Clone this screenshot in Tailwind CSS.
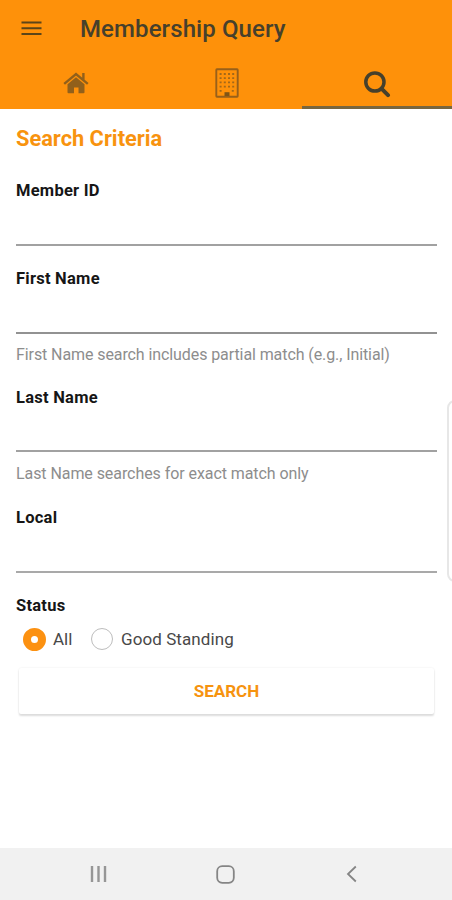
<!DOCTYPE html>
<html lang="en">
<head>
<meta charset="utf-8">
<title>Membership Query</title>
<script src="https://cdn.jsdelivr.net/npm/@tailwindcss/browser@4"></script>
</head>
<body class="font-[Roboto,sans-serif] bg-white">
<div class="relative flex flex-col h-[900px] w-[452px] overflow-hidden">
  <header class="h-[109px] shrink-0 bg-[#fe910a] text-[#46402c]">
    <div class="flex h-[58px] items-center pl-[21px]">
      <svg class="w-[21px] h-4 shrink-0 mb-0.5" viewBox="0 0 21 16" fill="none" stroke="#5b4519" stroke-width="2"><path d="M0.5 2.5H20.5M0.5 8.2H20.5M0.5 14H20.5"/></svg>
      <h1 class="ml-[38px] text-[24px] leading-7 font-medium tracking-[0.1px] whitespace-nowrap">Membership Query</h1>
    </div>
    <nav class="grid grid-cols-[151px_151px_150px] h-[51px]">
      <div class="flex items-center justify-center pb-px">
        <svg class="w-[26px] h-[22px]" viewBox="0 0 26 22"><path d="M1.2 11.8 13 2 24.8 11.8M20.4 1V8" fill="none" stroke="#91601b" stroke-width="2.4"/><path d="M4.5 12.2 13 5.2 21.5 12.2V20.2Q21.5 21.2 20.5 21.2H15.5V15.5H11V21.2H5.5Q4.5 21.2 4.5 20.2Z" fill="#91601b"/></svg>
      </div>
      <div class="flex items-center justify-center pb-px">
        <svg class="w-6 h-[30px]" viewBox="0 0 24 30"><rect x="1.3" y="1.3" width="21.4" height="27.4" rx=".6" fill="none" stroke="#98601a" stroke-width="1.9"/><path d="M4.6 6H20M4.6 10.2H20M4.6 14.4H20M4.6 18.6H20M4.6 22.8H8M16.8 22.8H20" stroke="#a36819" stroke-width="1.8" stroke-dasharray="2 2.2" fill="none"/><path d="M9.5 28V24.2H14.5V28Z" fill="#805516"/></svg>
      </div>
      <div class="flex items-center justify-center border-b-[3px] border-[#79663e] pt-[3px]">
        <svg class="w-7 h-7" viewBox="0 0 28 28" fill="none" stroke="#46402c"><circle cx="11.9" cy="12" r="9.1" stroke-width="3.5"/><path d="M18.5 18.7 25 25.2" stroke-width="4" stroke-linecap="round"/></svg>
      </div>
    </nav>
  </header>

  <main class="flex flex-col grow pl-4 pr-[15px] pt-4 text-[#161616]">
    <h2 class="h-7 leading-7 text-[21.8px] font-bold text-[#f8930f]">Search Criteria</h2>

    <section class="mt-[28px] h-[65px] border-b-2 border-[#a1a1a1]">
      <label class="block h-5 leading-5 text-[16.5px] tracking-[0.25px] font-bold">Member ID</label>
    </section>
    <section class="mt-[23px] h-[65px] border-b-2 border-[#929292]">
      <label class="block h-5 leading-5 text-[16.5px] tracking-[0.25px] font-bold">First Name</label>
    </section>
    <p class="mt-[11px] h-5 leading-5 text-[16px] tracking-[-0.09px] text-[#8d8d8d] whitespace-nowrap">First Name search includes partial match (e.g., Initial)</p>
    <section class="mt-[23px] h-[64px] border-b-2 border-[#a1a1a1]">
      <label class="block h-5 leading-5 text-[16.5px] tracking-[0.25px] font-bold">Last Name</label>
    </section>
    <p class="mt-[12px] h-5 leading-5 text-[16px] tracking-[-0.07px] text-[#8d8d8d] whitespace-nowrap">Last Name searches for exact match only</p>
    <section class="mt-[24px] h-[65px] border-b-2 border-[#a9a9a9]">
      <label class="block h-5 leading-5 text-[16.5px] tracking-[0.25px] font-bold">Local</label>
    </section>
    <p class="mt-[23px] h-5 leading-5 text-[16.5px] tracking-[0.25px] font-bold">Status</p>
    <div class="mt-[11px] flex h-6 items-center pl-[7px] text-[17px] text-[#484848]">
      <span class="size-[23px] rounded-full border-8 border-[#fc9111] bg-white"></span>
      <span class="ml-[7px] w-[38px] pt-px">All</span>
      <span class="size-[22px] rounded-full border border-[#bdbdbd]"></span>
      <span class="ml-2 pt-px tracking-[0.08px] whitespace-nowrap">Good Standing</span>
    </div>
    <button class="mt-[17px] ml-[3px] mr-[3px] h-[46px] rounded-[2px] bg-white pt-px shadow-[0_2px_2px_#dcdcdc,0_0_2px_#e8e8e8] text-[17px] font-bold text-[#f6930f]">SEARCH</button>
  </main>

  <aside class="absolute left-[447px] top-[400px] h-[182px] w-4 rounded-[9px] border-2 border-[#e7e7e7] bg-white"></aside>

  <footer class="flex h-[52px] shrink-0 items-center bg-[#f1f1f1] pl-[90px]">
    <svg class="w-[17px] h-[18px]" viewBox="0 0 17 18" stroke="#969696" stroke-width="2.4"><path d="M2 1V17M8.5 1V17M15 1V17"/></svg>
    <svg class="ml-[109px] w-[19px] h-[19px]" viewBox="0 0 19 19" fill="none" stroke="#858585" stroke-width="1.8"><rect x="1.2" y="1.2" width="16.6" height="16.6" rx="5"/></svg>
    <svg class="ml-[111px] w-[11px] h-[18px]" viewBox="0 0 11 18" fill="none" stroke="#858585" stroke-width="1.8"><path d="M9.8 1.5 2 9 9.8 16.5"/></svg>
  </footer>
</div>
</body>
</html>
